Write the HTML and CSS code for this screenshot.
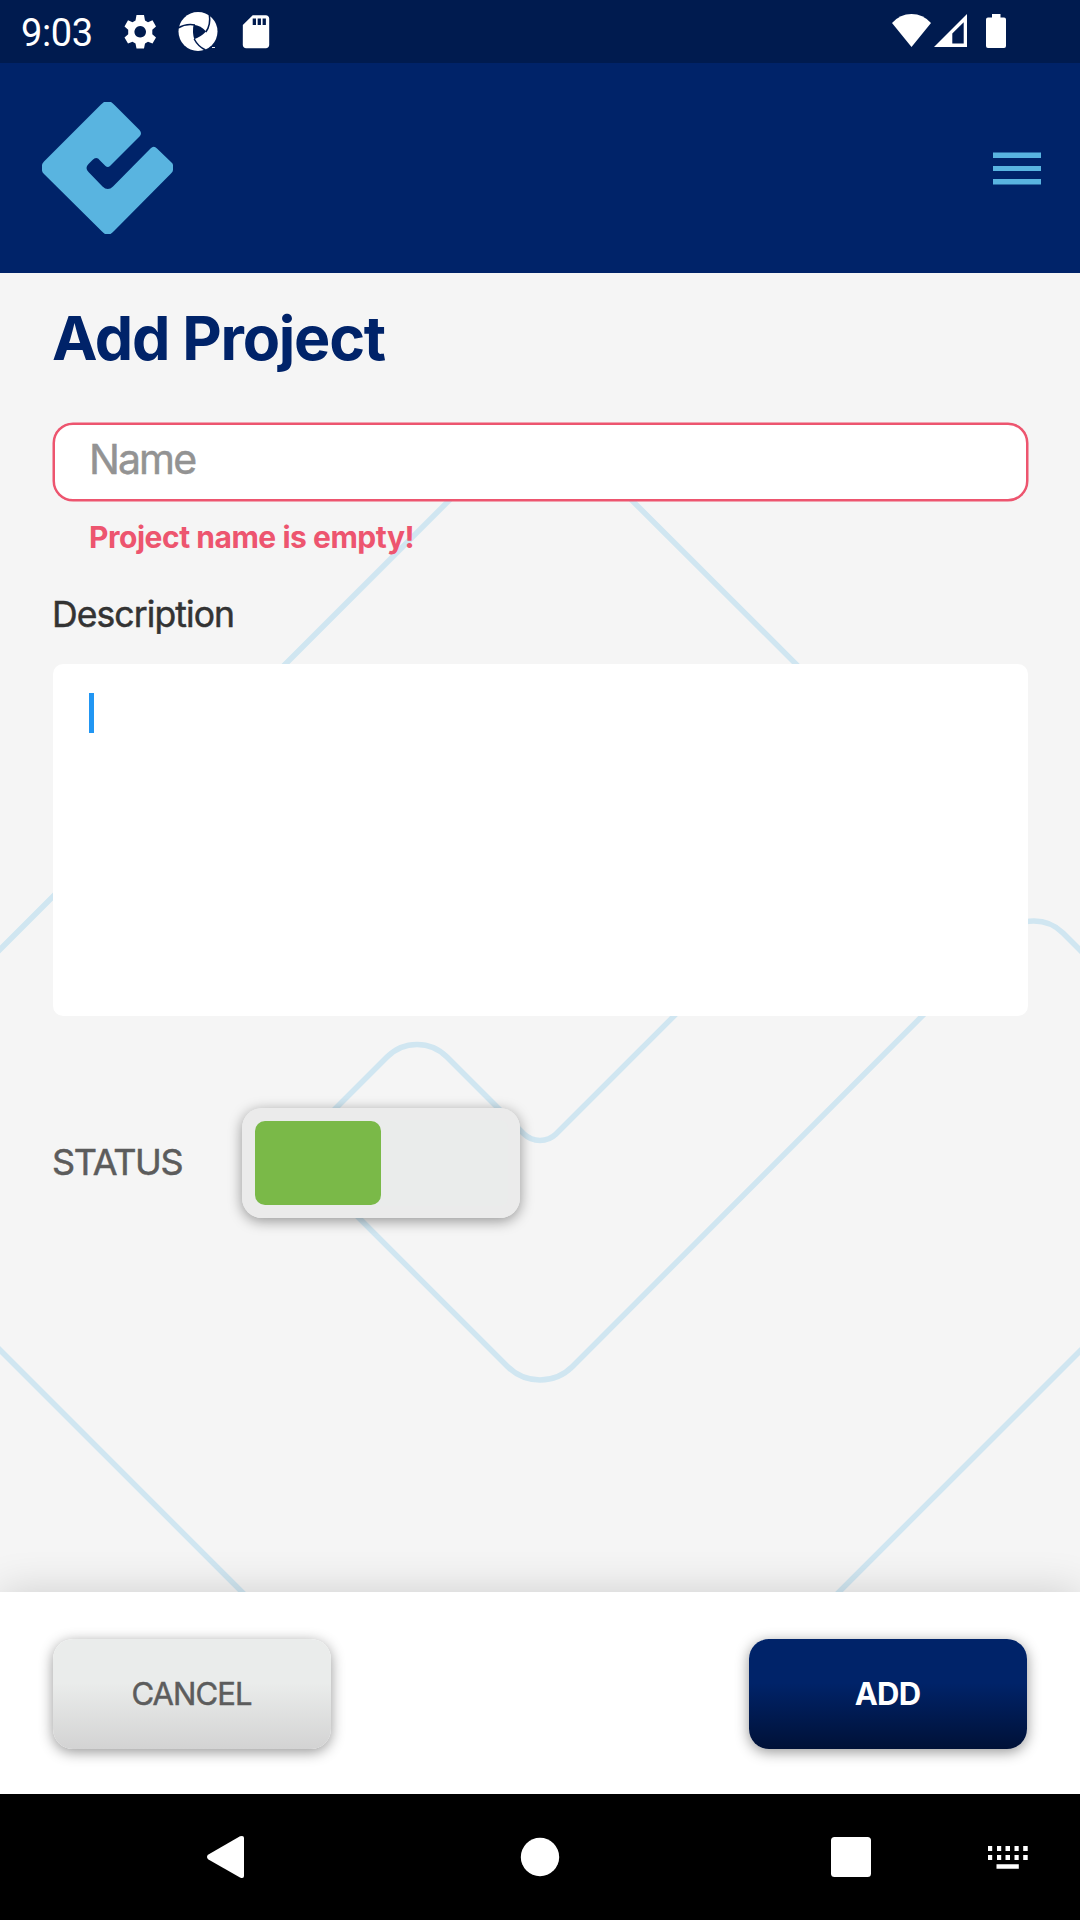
FILE: index.html
```html
<!DOCTYPE html>
<html lang="en">
<head>
<meta charset="utf-8">
<title>Add Project</title>
<link rel="stylesheet" href="styles.css">
</head>
<body>
<div class="screen">
  <div class="status-bar">
    <span class="clock">9:03</span>
    <svg class="notifications" width="160" height="63" viewBox="116 0 160 63" fill="#fff">
      <path fill-rule="evenodd" d="M136.500 15h7.500l1 5.500 3 1.700 4.500-2 3.500 6.300-3.700 3.300v4.400l3.700 3.300-3.500 6-4.500-1.800-3 1.800-1 5h-7.500l-1-5-3-1.800-4.500 1.800-3.500-6 3.700-3.300v-4.400l-3.700-3.300 3.500-6.300 4.500 2 3-1.700zM140.200 26a5.800 5.800 0 1 0 .01 0z"/>
      <circle cx="198" cy="31.500" r="19.500"/>
      <path fill="#001b4f" d="M193.600 24.800Q201 25.500 206 31.600Q201 37 194.300 39.200Q192 32 193.600 24.800Z"/>
      <g fill="none" stroke="#001b4f" stroke-width="1.500">
        <path d="M178 28Q186 23.300 195 25"/>
        <path d="M205.800 32Q211 25 209.300 14.500"/>
        <path d="M194.200 39Q198 46.500 205.500 50"/>
      </g>
      <path fill="#fff" d="M212 47h3v.9h-3z"/>
      <path transform="translate(236.200 11.900) scale(1.650)" d="M18 2h-8L4.020 8 4 20c0 1.100.9 2 2 2h12c1.100 0 2-.9 2-2V4c0-1.100-.9-2-2-2zm-6 6h-2V4h2v4zm3 0h-2V4h2v4zm3 0h-2V4h2v4z"/>
    </svg>
    <svg class="system" width="130" height="63" viewBox="884 0 130 63" fill="#fff">
      <path d="M892 23Q900 14 911.500 14T931 23L911.500 47Z"/>
      <path fill-rule="evenodd" d="M934 47L967 14V47ZM952.300 33.500V43.500H963.700V22.300Z"/>
      <path d="M992 14h8.500v3.500h3.500a2 2 0 0 1 2 2V46a2 2 0 0 1-2 2H988a2 2 0 0 1-2-2V19.500a2 2 0 0 1 2-2h4z"/>
    </svg>
  </div>

  <header class="app-bar">
    <svg width="131" height="132" viewBox="42 102 131 132" fill="#59b4e0">
      <path d="M104 102H111Q113 103.500 114.500 105L139.500 130Q142.500 133.300 139.500 136.500L110 166Q107.800 168 105.500 166L100 160.500Q96.500 156 92.500 160L88.500 164Q84.500 168 88.500 172L102.500 186.500Q107.800 191.500 113 186.500L150.500 148.500Q153.800 145 157 148.500L171 162Q173 163.500 173 165V170Q173 171.500 171 173.500L114 231Q112 233 110.500 234H105Q103.500 233 101.500 231L44 174Q42 172 42 170.500V165Q42 163.500 44 161.500L101 104.500Z"/>
    </svg>
    <svg width="48" height="33" viewBox="0 0 48 33" fill="#59b4e0">
      <path d="M0 .5h48v5.500H0zM0 14h48v5H0zM0 27h48v5.500H0z"/>
    </svg>
  </header>

  <main class="content">
    <svg class="pattern" width="1080" height="1319" viewBox="0 273 1080 1319">
      <path d="M-20 969.500L508 441.500A46 46 0 0 1 573 441.500L880 748A44 44 0 0 1 880 810L556 1134A23 23 0 0 1 524 1134L447 1057A42 42 0 0 0 387 1057L322 1122A42 42 0 0 0 322 1181L507.500 1366.500A46 46 0 0 0 572.500 1366.500L1005 933A41 41 0 0 1 1063 933L1110 980"/>
      <path d="M-20 1330L260 1610M1100 1331L820 1611"/>
    </svg>
    <h1>Add Project</h1>
    <div class="name-field">Name</div>
    <p class="error">Project name is empty!</p>
    <div class="label">Description</div>
    <div class="description"><span class="caret"></span></div>
    <div class="status-row">
      <span class="status-label">STATUS</span>
      <div class="toggle"><span class="knob"></span></div>
    </div>
  </main>

  <footer class="actions">
    <button class="button cancel">CANCEL</button>
    <button class="button add">ADD</button>
  </footer>

  <nav class="nav-bar">
    <svg width="1080" height="126" viewBox="0 1794 1080 126" fill="#fff">
      <path d="M208 1854.800L240 1836.300Q244 1835 244 1838V1876Q244 1879 240 1877.500L208 1859.200Q206 1857 208 1854.800Z"/>
      <circle cx="540" cy="1857" r="19.200"/>
      <rect x="831" y="1837" width="40" height="40" rx="3.500"/>
      <path d="M988 1846h4.200v5h-4.200zm9 0h4.200v5h-4.200zm8.500 0h4.500v5h-4.500zm9 0h4.200v5h-4.200zm8.700 0h4.500v5h-4.500zM988 1855h4.200v5h-4.200zm9 0h4.200v5h-4.200zm8.500 0h4.500v5h-4.500zm9 0h4.200v5h-4.200zm8.700 0h4.500v5h-4.500zM996.500 1864.200h22.300v4.600h-22.300z"/>
    </svg>
  </nav>
</div>
</body>
</html>
```
FILE: styles.css
```css
* { box-sizing: border-box; }

body { margin: 0; }

.screen {
  width: 1080px;
  height: 1920px;
  display: flex;
  flex-direction: column;
  overflow: hidden;
  background: #f5f5f5;
  font-family: Inter, "Liberation Sans", sans-serif;
}

.status-bar {
  height: 63px;
  display: flex;
  background: #001b4f;
}

.clock {
  width: 116px;
  padding-left: 21px;
  font: 38px/67px Roboto, sans-serif;
  letter-spacing: -.4px;
  color: #fff;
}

.system { margin-left: 608px; }

.app-bar {
  height: 210px;
  padding: 0 39px 0 42px;
  display: flex;
  align-items: center;
  justify-content: space-between;
  background: #002369;
}

.content {
  position: relative;
  height: 1319px;
  padding: 28px 52px 0 53px;
}

.pattern {
  position: absolute;
  left: 0;
  top: 0;
  fill: none;
  stroke: #d0e6f1;
  stroke-width: 5.500;
}

h1, .name-field, .error, .label, .description, .status-row { position: relative; }

h1 {
  margin: 0 0 0 -1px;
  font-size: 61px;
  line-height: 74px;
  font-weight: 700;
  letter-spacing: -1.280px;
  color: #002369;
}

.name-field {
  height: 78px;
  margin-top: 48px;
  padding-left: 34px;
  border: 2px solid #ed556f;
  border-radius: 20px;
  background: #fff;
  box-shadow: 0 0 0 .5px #ed556f;
  font-size: 41px;
  line-height: 69px;
  letter-spacing: -1.900px;
  -webkit-text-stroke: .5px;
  color: #939393;
}

.error {
  margin: 18px 0 0 36px;
  font-size: 30px;
  line-height: 36px;
  font-weight: 700;
  letter-spacing: -.470px;
  color: #ed556f;
}

.label {
  margin: 39px 0 0 -1px;
  font-size: 35.500px;
  line-height: 42px;
  letter-spacing: -.900px;
  -webkit-text-stroke: .5px;
  color: #333;
}

.description {
  height: 352px;
  margin-top: 28px;
  padding: 29px 36px;
  border-radius: 10px;
  background: #fff;
}

.caret {
  display: block;
  width: 5px;
  height: 40px;
  background: #2196f3;
}

.status-row {
  display: flex;
  align-items: center;
  margin-top: 92px;
}

.status-label {
  width: 190px;
  margin: -2px 0 0 -1px;
  font-size: 36px;
  line-height: 44px;
  letter-spacing: -1.300px;
  -webkit-text-stroke: .5px;
  color: #5c5c5c;
}

.toggle {
  width: 278px;
  height: 110px;
  padding: 13px;
  border-radius: 20px;
  background: #eaeceb;
  box-shadow: 0 3px 14px rgba(0, 0, 0, .4), inset 0 0 0 12px #ebebeb;
}

.knob {
  display: block;
  width: 126px;
  height: 84px;
  border-radius: 10px;
  background: #7ab948;
}

.actions {
  position: relative;
  height: 202px;
  padding: 47px 53px 0 53px;
  display: flex;
  justify-content: space-between;
  background: #fff;
  box-shadow: 0 0 40px rgba(0, 0, 0, .16);
}

.button {
  width: 278px;
  height: 110px;
  padding: 0 1px 0 0;
  border: 0;
  border-radius: 20px;
  font-family: inherit;
  font-size: 31px;
  line-height: 38px;
  box-shadow: 0 3px 14px rgba(0, 0, 0, .42);
}

.cancel {
  background: linear-gradient(#eaeceb 40%, #d3d3d3);
  letter-spacing: -.9px;
  -webkit-text-stroke: .5px;
  color: #5c5c5c;
}

.add {
  background: linear-gradient(#002369 40%, #001137);
  font-weight: 700;
  letter-spacing: -.8px;
  color: #fff;
}

.nav-bar {
  position: relative;
  height: 126px;
  background: #000;
}

svg { display: block; flex: none; }
```
